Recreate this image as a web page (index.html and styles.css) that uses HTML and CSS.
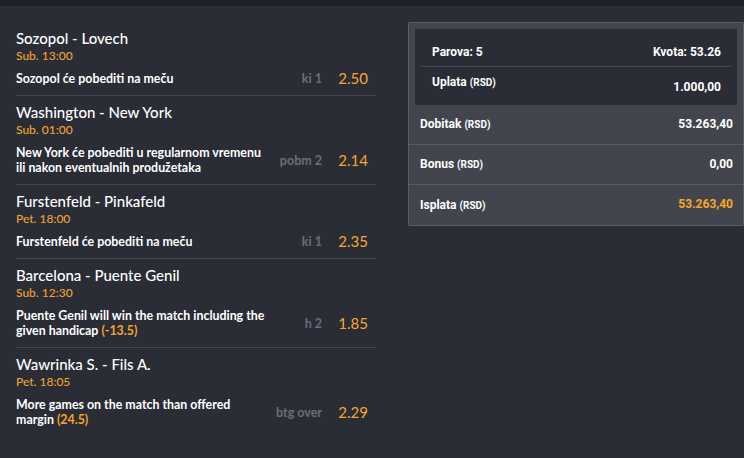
FILE: index.html
```html
<!DOCTYPE html>
<html>
<head>
<meta charset="utf-8">
<link rel="stylesheet" href="styles.css">
</head>
<body>
<div class="topbar"></div>
<div class="main">
  <div class="bets">
    <div class="bet">
      <div class="title">Sozopol - Lovech</div>
      <div class="time">Sub. 13:00</div>
      <div class="row">
        <div class="desc">Sozopol će pobediti na meču</div>
        <div class="code">ki 1</div>
        <div class="odd">2.50</div>
      </div>
    </div>
    <div class="bet">
      <div class="title">Washington - New York</div>
      <div class="time">Sub. 01:00</div>
      <div class="row">
        <div class="desc">New York će pobediti u regularnom vremenu ili nakon eventualnih produžetaka</div>
        <div class="code">pobm 2</div>
        <div class="odd">2.14</div>
      </div>
    </div>
    <div class="bet">
      <div class="title">Furstenfeld - Pinkafeld</div>
      <div class="time">Pet. 18:00</div>
      <div class="row">
        <div class="desc">Furstenfeld će pobediti na meču</div>
        <div class="code">ki 1</div>
        <div class="odd">2.35</div>
      </div>
    </div>
    <div class="bet">
      <div class="title">Barcelona - Puente Genil</div>
      <div class="time">Sub. 12:30</div>
      <div class="row">
        <div class="desc">Puente Genil will win the match including the given handicap <span class="hl">(-13.5)</span></div>
        <div class="code">h 2</div>
        <div class="odd">1.85</div>
      </div>
    </div>
    <div class="bet last">
      <div class="title">Wawrinka S. - Fils A.</div>
      <div class="time">Pet. 18:05</div>
      <div class="row">
        <div class="desc">More games on the match than offered margin <span class="hl">(24.5)</span></div>
        <div class="code">btg over</div>
        <div class="odd">2.29</div>
      </div>
    </div>
  </div>
  <div class="panel">
    <div class="inner">
      <div class="irow first">
        <span>Parova: 5</span>
        <span>Kvota: 53.26</span>
      </div>
      <div class="irow second">
        <span>Uplata <small>(RSD)</small></span>
        <span class="input">1.000,00</span>
      </div>
    </div>
    <div class="prow">
      <span>Dobitak <small>(RSD)</small></span>
      <span class="val">53.263,40</span>
    </div>
    <div class="prow">
      <span>Bonus <small>(RSD)</small></span>
      <span class="val">0,00</span>
    </div>
    <div class="prow lastrow">
      <span>Isplata <small>(RSD)</small></span>
      <span class="val orange">53.263,40</span>
    </div>
  </div>
</div>
</body>
</html>
```

FILE: styles.css
```css
html, body {
  margin: 0;
  padding: 0;
  background: #2a2d36;
  height: 100%;
}
body {
  font-family: Lato, "Noto Sans", sans-serif;
  color: #ffffff;
}
.topbar {
  height: 6px;
  background: #1f2129;
}
.main {
  display: flex;
  align-items: flex-start;
  padding: 16px 0 0 16px;
}
.bets {
  width: 360px;
}
.bet {
  padding: 7px 8px 9px 0;
  border-bottom: 1px solid #44474f;
}
.bet.last {
  border-bottom: none;
}
.title {
  font-size: 15px;
  line-height: 19px;
  font-weight: 500;
}
.time {
  font-size: 12px;
  line-height: 16px;
  color: #f0a22e;
  font-weight: 500;
}
.row {
  display: flex;
  align-items: center;
  margin-top: 7px;
}
.desc {
  flex: 0 0 253px;
  font-size: 12.4px;
  line-height: 15px;
  font-weight: 700;
}
.hl {
  color: #f5a623;
}
.code {
  flex: 1;
  font-size: 12.5px;
  line-height: 15px;
  font-weight: 700;
  color: #6b6e76;
  text-align: right;
}
.odd {
  width: 46px;
  text-align: right;
  font-size: 15px;
  line-height: 15px;
  color: #f7a823;
}
.panel {
  margin-left: 32px;
  width: 322px;
  background: #42454e;
  border: 1px solid #5c5f68;
  border-radius: 2px;
  padding: 6px 6px 0 6px;
  font-family: "Liberation Sans Narrow", "Roboto", sans-serif;
  font-weight: 700;
  font-size: 12px;
}
.panel small {
  font-size: 10px;
}
.inner {
  background: #2a2d35;
  padding: 0 6px;
}
.irow {
  display: flex;
  justify-content: space-between;
  padding: 0 10px 0 11px;
  line-height: 14px;
  box-sizing: border-box;
}
.irow.first {
  height: 38px;
  padding-top: 16px;
  border-bottom: 1px solid #454851;
}
.irow.second {
  height: 38px;
  padding-top: 8px;
}
.irow.second .input {
  padding-top: 5px;
}
.prow {
  display: flex;
  justify-content: space-between;
  align-items: center;
  height: 40px;
  box-sizing: border-box;
  margin: 0 -6px;
  padding: 0 10px 0 11px;
  border-bottom: 1px solid #5a5d66;
  line-height: 14px;
}
.prow .val {
  margin-top: -2px;
}
.prow.lastrow {
  border-bottom: none;
}
.orange {
  color: #f7a823;
}
```
